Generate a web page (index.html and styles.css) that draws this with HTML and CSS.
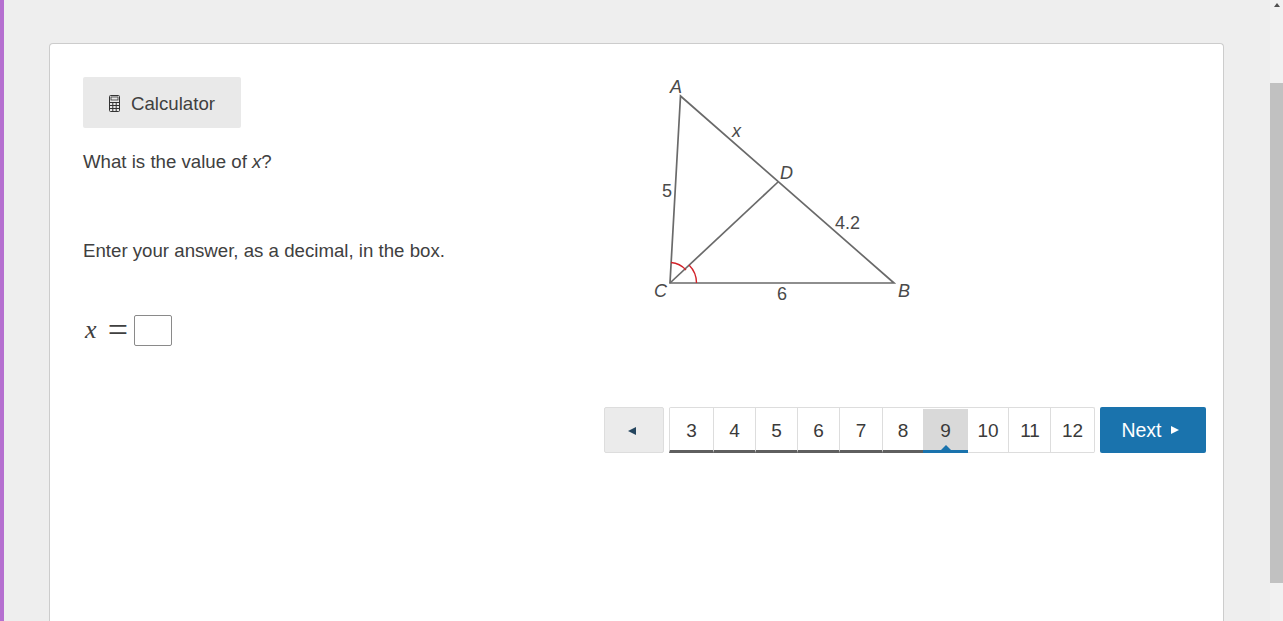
FILE: index.html
```html
<!DOCTYPE html>
<html lang="en">
<head>
  <meta charset="UTF-8" />
  <title>Question 9</title>
  <link rel="stylesheet" href="styles.css">
</head>
<body>
  <div class="accent"></div>
  <div class="page">
    <main class="card">
      <div class="question">
        <section class="prompt">
          <button class="calc-btn">
            <svg class="calc-icon" width="13" height="19" viewBox="0 0 13 19" fill="none" stroke="#333" stroke-width="1">
              <rect x="1.5" y="1.5" width="10" height="16" rx="1"/>
              <rect x="3" y="3" width="7" height="3" stroke-width="0.8"/>
              <path d="M1.5 8.5h10M1.5 11.5h10M1.5 14.5h10M4.8 8.5v9M8.2 8.5v9"/>
            </svg>
            <span class="calc-label">Calculator</span>
          </button>
          <p class="stem">What is the value of <i>x</i>?</p>
          <p class="instruction">Enter your answer, as a decimal, in the box.</p>
          <div class="answer">
            <span class="math-x">x</span>
            <span class="math-eq">=</span>
            <input class="answer-box" type="text">
          </div>
        </section>
        <figure class="diagram">
          <svg width="290" height="250" viewBox="640 70 290 250">
            <g fill="none" stroke="#6a6a6a" stroke-width="1.7">
              <path d="M680.5 96L894 283H670Z"/>
              <path d="M670 283L778 182"/>
            </g>
            <g fill="none" stroke="#d2232a" stroke-width="1.4">
              <path d="M671 262.500C677 263 682 265.500 686 270"/>
              <path d="M689 265C694 270 696.500 276 696.500 283"/>
            </g>
            <g class="fig-label">
              <text x="670" y="93" class="it">A</text>
              <text x="898" y="297" class="it">B</text>
              <text x="654" y="297" class="it">C</text>
              <text x="780" y="179" class="it">D</text>
              <text x="732" y="137" class="it">x</text>
              <text x="662" y="197">5</text>
              <text x="777" y="300">6</text>
              <text x="835" y="229">4.2</text>
            </g>
          </svg>
        </figure>
      </div>
      <nav class="pager">
        <button class="prev"><span class="tri-left"></span></button>
        <ol class="pages">
          <li class="seen first">3</li>
          <li class="seen">4</li>
          <li class="seen">5</li>
          <li class="seen">6</li>
          <li class="seen wide">7</li>
          <li class="seen narrow">8</li>
          <li class="current">9</li>
          <li class="after-current">10</li>
          <li class="eleven">11</li>
          <li class="last">12</li>
        </ol>
        <button class="next">Next <span class="tri-right"></span></button>
      </nav>
    </main>
  </div>
  <div class="scrollbar">
    <div class="arrow-up"></div>
    <div class="thumb"></div>
  </div>
</body>
</html>
```

FILE: styles.css
```css
*, *::before, *::after { box-sizing: border-box; }
html, body { height: 100%; }
body {
  margin: 0;
  display: flex;
  height: 621px;
  overflow: hidden;
  background: #eeeeee;
  color: #404040;
  font-family: "Liberation Sans", Arial, sans-serif;
  font-size: 18.67px;
}
.accent {
  width: 4px;
  background: #b56fd0;
}
.page {
  flex: 1;
  height: 621px;
  padding: 43px 46px 0 45px;
}
.card {
  height: 578px;
  background: #fff;
  border: 1px solid #ccc;
  border-bottom: none;
  border-radius: 4px 4px 0 0;
  padding: 33px 17px 0 33px;
}
.question {
  display: flex;
  height: 330px;
}
.prompt { width: 567px; }
.calc-btn {
  display: flex;
  align-items: center;
  gap: 10px;
  width: 158px;
  height: 51px;
  padding: 0 0 0 25px;
  background: #e9e9e9;
  border: none;
  border-radius: 2px;
  color: #404040;
  font: inherit;
}
.calc-icon { margin-top: 2px; }
.calc-label { margin-top: 2px; }
.stem { margin: 23px 0 0; line-height: 22px; }
.instruction { margin: 67px 0 0; line-height: 22px; }
.answer {
  display: flex;
  align-items: center;
  margin-top: 52px;
  height: 32px;
}
.math-x {
  font-family: "Liberation Serif", serif;
  font-style: italic;
  font-size: 26px;
  width: 21px;
  padding-left: 2px;
}
.math-eq {
  font-family: "Liberation Serif", serif;
  font-size: 36px;
  line-height: 32px;
  width: 30px;
  text-align: center;
  padding-right: 2px;
}
.answer-box {
  width: 38px;
  height: 31px;
  border: 1px solid #8a8a8a;
  border-radius: 2px;
  background: #fff;
}
.diagram {
  margin: -7px 0 0 -10px;
  height: 250px;
}
.fig-label text {
  font-family: "Liberation Sans", Arial, sans-serif;
  font-size: 18px;
  fill: #4a4a4a;
}
.fig-label .it { font-style: italic; }

.pager {
  display: flex;
  justify-content: flex-end;
  gap: 5px;
  height: 46px;
}
.prev {
  width: 60px;
  background: #ebebeb;
  border: 1px solid #ddd;
  border-radius: 2px;
  padding: 0 4px 0 0;
}
.tri-left {
  display: inline-block;
  border-style: solid;
  border-width: 4.500px 8px 4.500px 0;
  border-color: transparent #24455e transparent transparent;
}
.pages {
  display: flex;
  margin: 0;
  padding: 0;
  list-style: none;
  border-top: 1px solid #ddd;
  border-right: 1px solid #ddd;
  border-radius: 2px;
  background: #fff;
}
.pages li {
  position: relative;
  width: 42px;
  line-height: 46px;
  text-align: center;
  font-size: 19px;
  color: #3a3a3a;
  border-left: 1px solid #ddd;
  border-bottom: 1px solid #ddd;
}
.pages .first { width: 44px; }
.pages .last { width: 44px; }
.pages .wide { width: 43px; }
.pages .narrow { width: 41px; }
.pages .eleven { padding-left: 1px; }
.pages .seen { border-bottom: 3px solid #5f5f5f; }
.pages .current {
  width: 45px;
  margin-top: 1px;
  background: #d9d9d9;
  border-left: none;
  border-bottom: 3px solid #1a73ad;
  line-height: 44px;
}
.pages .after-current { width: 40px; border-left: none; }
.pages .current::after {
  content: "";
  position: absolute;
  left: 18px;
  bottom: 0;
  border-style: solid;
  border-width: 0 5px 5px;
  border-color: transparent transparent #1a73ad;
}
.next {
  display: flex;
  align-items: center;
  justify-content: center;
  gap: 9px;
  width: 106px;
  padding: 0 6px 0 0;
  background: #1a73ad;
  border: none;
  border-radius: 2px;
  color: #fff;
  font: inherit;
  font-size: 19.500px;
}
.tri-right {
  border-style: solid;
  border-width: 4.500px 0 4.500px 8px;
  border-color: transparent transparent transparent #fff;
}

.scrollbar {
  width: 13px;
  background: #f1f1f1;
}
.arrow-up {
  width: 0;
  margin: 3px auto 0;
  border-style: solid;
  border-width: 0 3.500px 4px;
  border-color: transparent transparent #505050;
}
.thumb {
  height: 500px;
  margin-top: 76px;
  background: #c1c1c1;
}
```
